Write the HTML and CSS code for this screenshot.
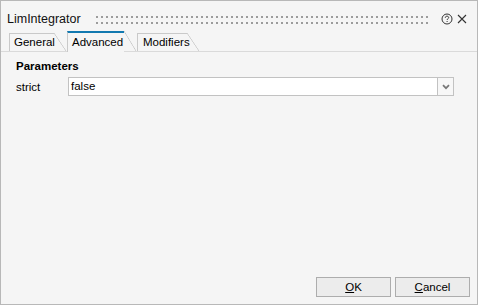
FILE: index.html
```html
<!DOCTYPE html>
<html>
<head>
<meta charset="utf-8">
<link rel="stylesheet" href="styles.css">
</head>
<body>
<div class="window">
  <div class="titlebar">
    <span class="title">LimIntegrator</span>
    <div class="grip"></div>
    <svg class="help" width="12" height="12" viewBox="0 0 12 12">
      <circle cx="6" cy="6" r="5" fill="none" stroke="#333" stroke-width="1"/>
      <path d="M4.3 4.8 C4.3 3.7 5 3.2 6 3.2 C7 3.2 7.7 3.7 7.7 4.6 C7.7 5.7 6.1 5.8 6.1 7" fill="none" stroke="#333" stroke-width="1"/>
      <rect x="5.6" y="8" width="1" height="1" fill="#333"/>
    </svg>
    <svg class="close" width="10" height="10" viewBox="0 0 10 10">
      <path d="M1 1 L9 9 M9 1 L1 9" stroke="#333" stroke-width="1.1" fill="none"/>
    </svg>
  </div>
  <div class="tabbar">
    <div class="tab tab-general">General</div>
    <div class="tab tab-advanced active">Advanced</div>
    <div class="tab tab-modifiers">Modifiers</div>
  </div>
  <div class="content">
    <div class="section">Parameters</div>
    <div class="row">
      <div class="label">strict</div>
      <div class="combo">
        <div class="field">false</div>
        <div class="dropbtn">
          <svg width="8" height="6" viewBox="0 0 8 6"><path d="M1 1.2 L4 4.2 L7 1.2" fill="none" stroke="#777" stroke-width="1.7"/></svg>
        </div>
      </div>
    </div>
  </div>
  <div class="footer">
    <button class="btn"><u>O</u>K</button>
    <button class="btn"><u>C</u>ancel</button>
  </div>
</div>
</body>
</html>
```
FILE: styles.css
```css
html, body {
  margin: 0;
  padding: 0;
  background: #f5f5f5;
}
.window {
  width: 478px;
  height: 305px;
  box-sizing: border-box;
  border: 1px solid #b8b8b8;
  background: #f5f5f5;
  display: flex;
  flex-direction: column;
  font-family: "Liberation Sans", Arial, sans-serif;
  color: #000;
}
.titlebar {
  height: 30px;
  box-sizing: border-box;
  padding: 6px 9px 0 6px;
  display: flex;
  align-items: center;
}
.title {
  font-size: 12.5px;
  color: #111;
}
.grip {
  flex: 1;
  height: 8px;
  margin: 1px 11px 0 15px;
  background-image: radial-gradient(circle at 1px 1px, #9c9c9c 1px, transparent 1.3px);
  background-size: 5px 6px;
}
.help {
  margin-right: 4px;
}
.close {
  margin-right: 1px;
}
.tabbar {
  height: 20px;
  border-bottom: 1px solid #dadada;
  display: flex;
  align-items: flex-end;
  padding-left: 8px;
  font-size: 11.5px;
}
.tab {
  position: relative;
  height: 18px;
  box-sizing: border-box;
  border-left: 1px solid #c9c9c9;
  border-top: 1px solid #c9c9c9;
  padding-left: 4px;
  line-height: 17px;
  margin-right: 13px;
  color: #000;
}
.tab::after {
  content: "";
  position: absolute;
  top: -1px;
  right: -12px;
  width: 12px;
  bottom: 0;
  background: linear-gradient(to top right, transparent calc(50% - 0.7px), #c9c9c9 50%, transparent calc(50% + 0.7px));
}
.tab.active {
  height: 21px;
  margin-bottom: -1px;
  background: #f5f5f5;
  border-top: 2px solid #1279b0;
  line-height: 18px;
}
.tab.active::after {
  top: -2px;
  bottom: 1px;
}
.tab-general { width: 45px; }
.tab-advanced { width: 57px; }
.tab-modifiers { width: 50px; padding-left: 5px; }
.content {
  padding: 7px 23px 0 15px;
}
.section {
  font-weight: bold;
  font-size: 11.5px;
  line-height: 14px;
}
.row {
  display: flex;
  align-items: center;
  margin-top: 4px;
}
.label {
  width: 52px;
  font-size: 11.5px;
}
.combo {
  flex: 1;
  height: 19px;
  display: flex;
}
.field {
  flex: 1;
  box-sizing: border-box;
  border: 1px solid #c2c2c2;
  background: #fff;
  padding-left: 2px;
  font-size: 11.5px;
  line-height: 17px;
}
.dropbtn {
  width: 16px;
  box-sizing: border-box;
  border: 1px solid #c2c2c2;
  border-left: none;
  background: #f7f7f7;
  display: flex;
  align-items: center;
  justify-content: center;
}
.footer {
  margin-top: auto;
  display: flex;
  justify-content: flex-end;
  gap: 4px;
  padding: 0 7px 7px 0;
}
.btn {
  width: 75px;
  height: 20px;
  box-sizing: border-box;
  border: 1px solid #adadad;
  background: #ececec;
  font-family: "Liberation Sans", Arial, sans-serif;
  font-size: 11.5px;
  color: #000;
  padding: 0;
  margin: 0;
}
```
